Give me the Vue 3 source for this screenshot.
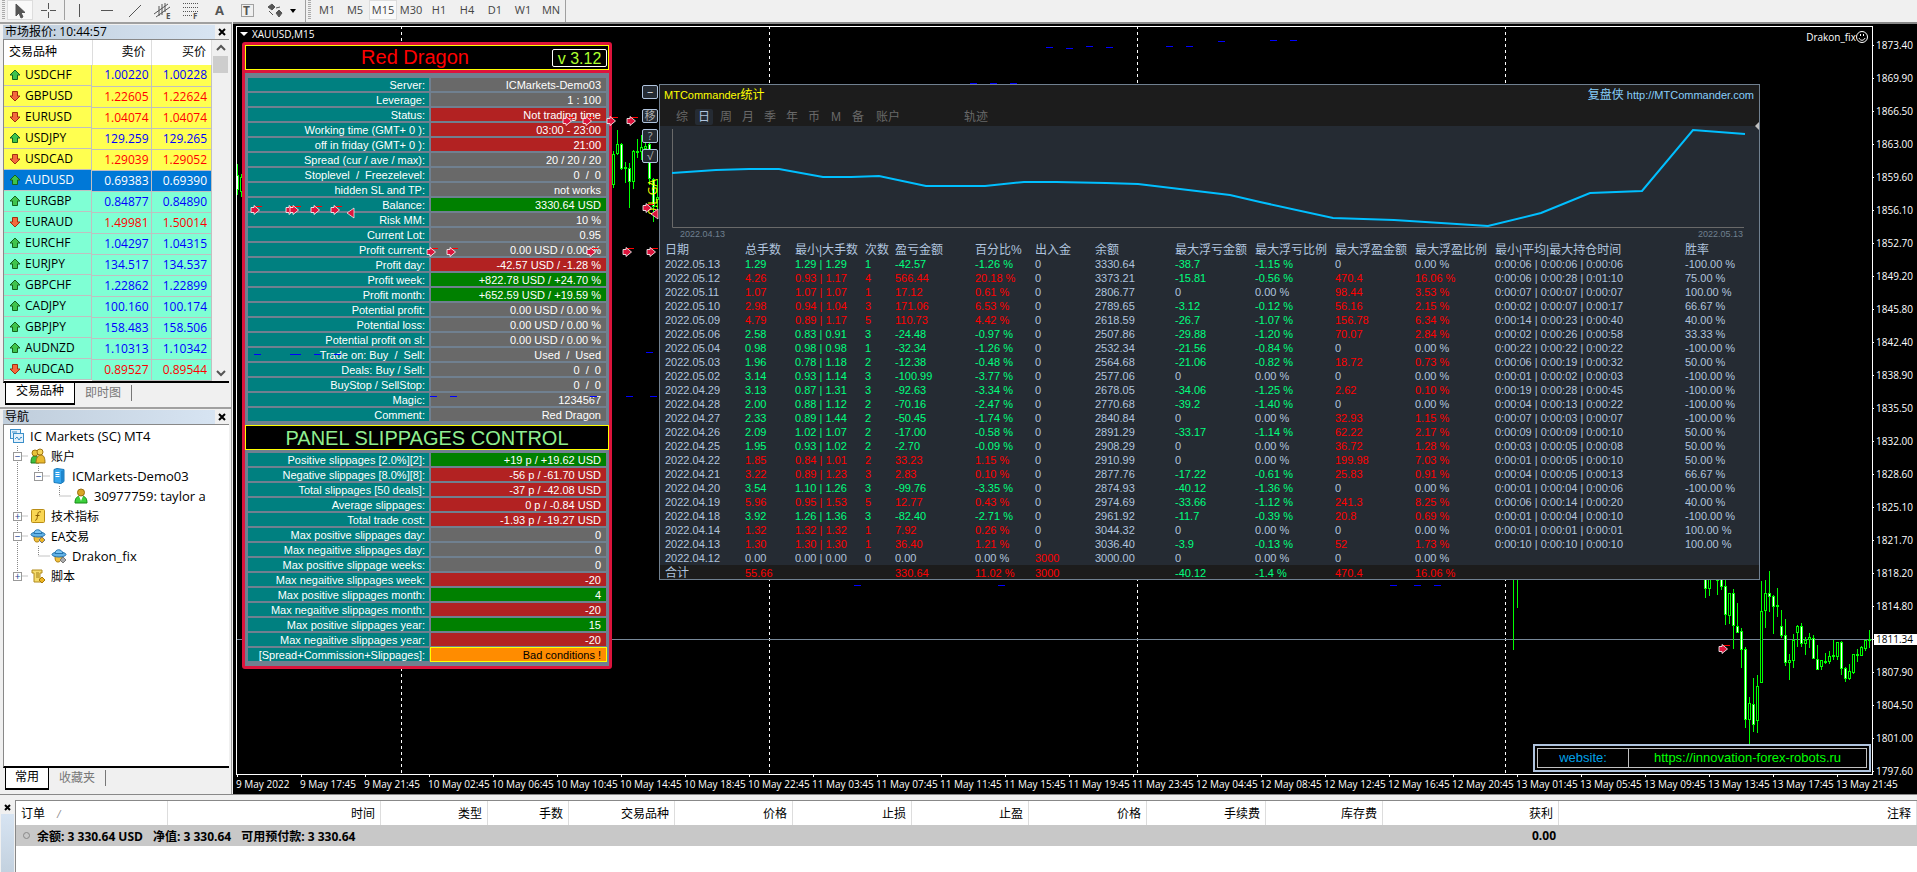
<template>
  <div class="terminal">
    <!-- 工具栏 -->
    <header class="toolbar">
      <span class="grip"></span>
      <button
        v-for="tool in tools"
        :key="tool.name"
        class="tool"
        :class="[tool.name, { pressed: activeTool === tool.name }]"
        :aria-label="tool.name"
        @click="activeTool = tool.name"
      >
        <svg width="22" height="20" viewBox="0 0 22 20">
          <path :d="tool.path" :fill="tool.fill || 'none'" stroke="#555" :stroke-dasharray="tool.dash" />
          <path v-if="tool.extra" :d="tool.extra" fill="none" stroke="#555" />
          <text v-if="tool.text" :x="tool.tx" :y="tool.ty" :font-size="tool.size" font-weight="bold" fill="#555">{{ tool.text }}</text>
        </svg>
      </button>
      <span class="caret"></span>
      <span class="divider"></span>
      <span class="grip"></span>
      <button
        v-for="frame in frames"
        :key="frame"
        class="frame"
        :class="{ pressed: activeFrame === frame }"
        @click="activeFrame = frame"
      >
        {{ frame }}
      </button>
      <span class="divider"></span>
    </header>

    <main class="workspace">
      <aside class="sidebar">
        <!-- 市场报价 -->
        <section class="dock market">
          <div class="dock-title">
            <span class="dock-name">市场报价: 10:44:57</span>
            <button class="close" aria-label="关闭市场报价"><svg width="8" height="8"><path d="M1 1l6 6M7 1l-6 6" stroke="#000" stroke-width="2" /></svg></button>
          </div>
          <div class="market-body">
            <table class="quotes">
              <colgroup>
                <col class="col-symbol" />
                <col class="col-bid" />
                <col />
              </colgroup>
              <thead>
                <tr>
                  <th class="left">交易品种</th>
                  <th>卖价</th>
                  <th>买价</th>
                </tr>
              </thead>
              <tbody>
                <tr
                  v-for="(quote, index) in quotes"
                  :key="quote[0]"
                  :class="[index < 5 ? 'major' : 'minor', { selected: selected === quote[0] }]"
                  @click="selected = quote[0]"
                >
                  <td class="left">
                    <svg width="12" height="12" viewBox="0 0 12 12">
                      <path v-if="quote[3]" d="M6 1L11 6H8.5V10.5H3.5V6H1Z" fill="#3fc44c" stroke="#14641c" />
                      <path v-else d="M6 11L11 6H8.5V1.5H3.5V6H1Z" fill="#f4683c" stroke="#a02c10" />
                    </svg>
                    {{ quote[0] }}
                  </td>
                  <td :class="quote[3] ? 'up' : 'down'">{{ quote[1] }}</td>
                  <td :class="quote[3] ? 'up' : 'down'">{{ quote[2] }}</td>
                </tr>
              </tbody>
            </table>
            <div class="scrollbar">
              <svg width="16" height="16"><path d="M4 10l4-4 4 4" fill="none" stroke="#555" stroke-width="2" /></svg>
              <span class="thumb"></span>
              <svg width="16" height="16"><path d="M4 6l4 4 4-4" fill="none" stroke="#555" stroke-width="2" /></svg>
            </div>
          </div>
          <div class="tabs">
            <button class="tab active">交易品种</button>
            <button class="tab">即时图</button>
          </div>
        </section>

        <!-- 导航 -->
        <section class="dock navigator">
          <div class="dock-title">
            <span class="dock-name">导航</span>
            <button class="close" aria-label="关闭导航"><svg width="8" height="8"><path d="M1 1l6 6M7 1l-6 6" stroke="#000" stroke-width="2" /></svg></button>
          </div>
          <div class="tree">
            <svg class="tree-lines" width="100" height="170">
              <path d="M13.5 20V150M13.5 30H24M13.5 90H24M13.5 110H24M13.5 150H24M34.5 40V50H46M55.5 60V70H67M34.5 120V130H46" fill="none" stroke="#888" stroke-dasharray="1 1" />
            </svg>
            <div v-for="node in tree" :key="node.label" class="node" :class="'level-' + node.level">
              <span v-if="node.mark" class="expander">{{ node.mark }}</span>
              <svg width="16" height="16" viewBox="0 0 16 16">
                <g v-if="node.icon === 'root'" fill="#e4f1fb" stroke="#3b8fc9">
                  <rect x="1.5" y="1.5" width="10" height="9" />
                  <rect x="4.5" y="5.5" width="10" height="9" />
                  <path d="M6 11l2-2 2 3 2-3 1 1M3 4h5" fill="none" />
                </g>
                <g v-else-if="node.icon === 'users'">
                  <path d="M1 15c0-5 1-7 4-7s4 2 4 7z" fill="#3fbf3f" stroke="#1d7a1d" />
                  <circle cx="5" cy="5" r="3" fill="#e9c23a" stroke="#a07410" />
                  <path d="M6 15c0-5 2-8 5-8s4 3 4 8z" fill="#e9b92e" stroke="#a07410" />
                  <circle cx="10" cy="4" r="3" fill="#f6d65a" stroke="#a07410" />
                </g>
                <g v-else-if="node.icon === 'server'">
                  <path d="M3 1.5l3-1 7 1v12l-3 2-7-1z" fill="#35a6ee" stroke="#1878b8" />
                  <path d="M10 3v12l3-2V2z" fill="#1f86cc" />
                  <path d="M4.500 4.500h4M4.500 6.500h4M4.500 8.500h4" stroke="#fff" />
                </g>
                <g v-else-if="node.icon === 'user'">
                  <path d="M2 15c0-5 2-7 6-7s6 2 6 7z" fill="#3ccf3c" stroke="#158a15" />
                  <path d="M6 8l2 5 2-5z" fill="#fff" />
                  <circle cx="8" cy="4.5" r="3.500" fill="#d9a526" stroke="#9a6c0c" />
                </g>
                <g v-else-if="node.icon === 'indicator'">
                  <rect x="1.5" y="1.5" width="13" height="13" rx="1" fill="#f9d654" stroke="#b98d16" />
                  <path d="M11 4c-3-1-3 1-3.5 4s-1 5-2.5 4M5.5 7.5h4" fill="none" stroke="#8a5c00" />
                </g>
                <g v-else-if="node.icon === 'script'">
                  <path d="M2 2h10v3h-2v7h2v2H4V5H2z" fill="#f6dc6c" stroke="#b08a1c" />
                  <path d="M6 5h3M6 7h3M6 9h3" stroke="#a07c18" />
                  <path d="M12 9l3 3-3 3-3-3z" fill="#eeb522" stroke="#a87a0a" />
                </g>
                <g v-else>
                  <path d="M4 8c0 5 1 6 3 6s4-2 4-6z" fill="#f0c040" stroke="#a87a0a" />
                  <ellipse cx="8" cy="6.5" rx="7" ry="2.500" fill="#62b2e6" stroke="#2474ae" />
                  <path d="M4 5.500c0-5 7-5 8 0z" fill="#7cc4f2" stroke="#2474ae" />
                  <path d="M12 9l3 3-3 3-3-3z" :fill="node.icon === 'ea' ? '#eeb522' : '#aaa'" stroke="#777" />
                </g>
              </svg>
              <span :class="{ cjk: node.local }">{{ node.label }}</span>
            </div>
          </div>
          <div class="tabs">
            <button class="tab active">常用</button>
            <button class="tab">收藏夹</button>
          </div>
        </section>
      </aside>

      <!-- K线图 -->
      <section class="chart">
        <div class="plot">
          <svg class="layer" width="100%" height="100%">
            <g transform="translate(-237 -27)" shape-rendering="crispEdges">
              <path d="M401.5 26V774M769.5 26V774M1137.5 26V774M1505.5 26V774" stroke="#fff" stroke-dasharray="3 3" />
              <path d="M237 639.5H1873" stroke="#778899" />
              <g v-for="(bar, index) in candles" :key="index" stroke="#00ff00">
                <line :x1="bar[0] + 0.5" :x2="bar[0] + 0.5" :y1="bar[1]" :y2="bar[2]" />
                <rect
                  v-if="bar[4]"
                  :x="bar[0] - 0.5"
                  :y="bar[3] + 0.5"
                  width="2"
                  :height="bar[4] - bar[3] - 1"
                  :fill="bar[5] ? '#fff' : '#000'"
                />
              </g>
            </g>
          </svg>

          <div class="symbol"><span class="symbol-caret"></span>XAUUSD,M15</div>
          <div class="expert">
            Drakon_fix
            <svg width="12" height="12" viewBox="0 0 12 12" fill="none" stroke="#fff">
              <circle cx="6" cy="6" r="5.500" />
              <path d="M4.500 3v2M7.500 3v2M3 7c1 3 5 3 6 0" />
            </svg>
          </div>
          <div class="lot-note">0.L GA</div>

          <!-- Red Dragon 面板 -->
          <div class="dragon">
            <div class="dragon-title">
              <span class="dragon-name">Red Dragon</span>
              <span class="version">v 3.12</span>
            </div>
            <div class="dragon-body">
              <table class="params">
                <tbody>
                  <tr v-for="row in statusRows" :key="row[0]">
                    <th>{{ row[0] }}</th>
                    <td :class="row[2]">{{ row[1] }}</td>
                  </tr>
                </tbody>
              </table>
              <div class="slippage-title">PANEL SLIPPAGES CONTROL</div>
              <table class="params">
                <tbody>
                  <tr v-for="row in slippageRows" :key="row[0]">
                    <th>{{ row[0] }}</th>
                    <td :class="row[2]">{{ row[1] }}</td>
                  </tr>
                </tbody>
              </table>
            </div>
          </div>

          <div class="side-buttons">
            <button class="minimize">−</button>
            <button>移</button>
            <button>?</button>
            <button>√</button>
          </div>

          <!-- MTCommander 统计窗口 -->
          <div class="commander">
            <div class="commander-head">
              <div class="commander-title">
                <span class="name">MTCommander<span class="cjk">统计</span></span>
                <a href="http://MTCommander.com"><span class="cjk">复盘侠</span> http://MTCommander.com</a>
              </div>
              <nav class="periods">
                <button
                  v-for="period in periods"
                  :key="period"
                  :class="{ active: activePeriod === period, wide: period === '账户', last: period === '轨迹' }"
                  @click="activePeriod = period"
                >
                  {{ period }}
                </button>
              </nav>
              <span class="resize"></span>
            </div>
            <div class="equity">
              <svg width="100%" height="101" viewBox="0 0 1087 101" preserveAspectRatio="none">
                <path d="M0.5 2V100.5H1072" fill="none" stroke="#696969" />
                <polyline :points="equity" fill="none" stroke="#00bfff" stroke-width="2" />
              </svg>
              <div class="equity-range"><span>2022.04.13</span><span>2022.05.13</span></div>
            </div>
            <table class="stats">
              <colgroup>
                <col v-for="(width, index) in statWidths" :key="index" :style="{ width: width + 'px' }" />
                <col />
              </colgroup>
              <thead>
                <tr>
                  <th v-for="head in statHeads" :key="head">{{ head }}</th>
                </tr>
              </thead>
              <tbody>
                <tr v-for="row in stats" :key="row[0]">
                  <td v-for="(cell, index) in row" :key="index" :class="tone(row, index)">{{ cell }}</td>
                </tr>
              </tbody>
              <tfoot>
                <tr>
                  <td v-for="(cell, index) in total" :key="index" :class="tone(total, index)">{{ cell }}</td>
                </tr>
              </tfoot>
            </table>
          </div>

          <div class="website">
            <span class="website-label">website:</span>
            <a href="https://innovation-forex-robots.ru">https://innovation-forex-robots.ru</a>
          </div>

          <!-- 成交箭头与挂单标记 -->
          <svg class="layer marks" width="100%" height="100%">
            <g transform="translate(-237 -27)">
              <path
                v-for="(dash, index) in dashes"
                :key="'d' + index"
                :d="`M${dash[0]} ${dash[1] + 0.5}h${dash[2] || 7}`"
                stroke="#0000ff"
              />
              <g v-for="(mark, index) in marks" :key="'m' + index" :transform="`translate(${mark[0]} ${mark[1]})`">
                <path v-if="mark[2]" d="M3 -5V5L-4 0Z" fill="#dc143c" stroke="#fff" stroke-width="0.7" />
                <template v-else>
                  <path d="M-1 -3.500h8" stroke="#ff0000" />
                  <path d="M-1 -4.500L4.500 0L-1 4.500V2.500H-4V-2.500H-1Z" fill="#dc143c" stroke="#fff" stroke-width="0.8" />
                </template>
              </g>
            </g>
          </svg>
        </div>

        <div class="price-axis">
          <div v-for="price in prices" :key="price" class="price" :class="{ current: price === '1811.34' }">
            <span>{{ price }}</span>
          </div>
        </div>
        <div class="time-axis">
          <span v-for="time in times" :key="time" class="time">{{ time }}</span>
        </div>
      </section>
    </main>

    <!-- 终端 -->
    <section class="orders">
      <div class="orders-strip">
        <button class="close" aria-label="关闭终端"><svg width="7" height="7"><path d="M1 1l5 5M6 1l-5 5" stroke="#000" stroke-width="2" /></svg></button>
        <span class="strip-fill"></span>
      </div>
      <table class="orders-table">
        <colgroup>
          <col v-for="(width, index) in orderWidths" :key="index" :style="{ width: width + 'px' }" />
          <col />
        </colgroup>
        <thead>
          <tr>
            <th v-for="(head, index) in orderHeads" :key="index">{{ head }}<i v-if="index === 0">/</i></th>
          </tr>
        </thead>
        <tbody>
          <tr>
            <td colspan="11">
              <div class="summary">
                <span class="dot"></span><span>余额: 3 330.64 USD</span><span>净值: 3 330.64</span><span>可用预付款: 3 330.64</span>
              </div>
            </td>
            <td class="profit">0.00</td>
            <td></td>
          </tr>
        </tbody>
      </table>
    </section>
  </div>
</template>

<script setup>
import { ref } from 'vue'

const activeTool = ref('cursor')
const activeFrame = ref('M15')
const activePeriod = ref('日')
const selected = ref('AUDUSD')

const tools = [
  { name: 'cursor', path: 'M7 3V15L10 12L12 17L14 16L12 11.5H16Z', fill: '#555' },
  { name: 'crosshair', path: 'M10.5 3V9M10.5 12V18M3 10.5H9M12 10.5H18' },
  { name: 'vertical', path: 'M11.5 4V17' },
  { name: 'horizontal', path: 'M5 10.5H17' },
  { name: 'trend', path: 'M5 17L17 5' },
  { name: 'channel', path: 'M2 14L16 4M4 17L18 7M7 6V16M10 4V15M13 3V12', text: 'E', tx: 14, ty: 19, size: 8 },
  { name: 'fibonacci', path: 'M3 3.5H18M3 7.5H18M3 11.5H18M3 15.5H12', dash: '1 1', text: 'F', tx: 13, ty: 19, size: 8 },
  { name: 'text', path: '', text: 'A', tx: 7, ty: 15, size: 13 },
  { name: 'label', path: 'M5.5 4.5H17.5V16.5H5.5Z', dash: '1 1', text: 'T', tx: 7, ty: 15, size: 12 },
  { name: 'shapes', path: 'M4 7L8 4L11 7L8 10ZM12 13L15 10L18 13L15 17Z', fill: '#555', extra: 'M5 11L9 15M12 8l4-1' },
]

const frames = ['M1', 'M5', 'M15', 'M30', 'H1', 'H4', 'D1', 'W1', 'MN']

// 品种, 卖价, 买价, 是否上涨
const quotes = [
  ['USDCHF', '1.00220', '1.00228', true],
  ['GBPUSD', '1.22605', '1.22624', false],
  ['EURUSD', '1.04074', '1.04074', false],
  ['USDJPY', '129.259', '129.265', true],
  ['USDCAD', '1.29039', '1.29052', false],
  ['AUDUSD', '0.69383', '0.69390', true],
  ['EURGBP', '0.84877', '0.84890', true],
  ['EURAUD', '1.49981', '1.50014', false],
  ['EURCHF', '1.04297', '1.04315', true],
  ['EURJPY', '134.517', '134.537', true],
  ['GBPCHF', '1.22862', '1.22899', true],
  ['CADJPY', '100.160', '100.174', true],
  ['GBPJPY', '158.483', '158.506', true],
  ['AUDNZD', '1.10313', '1.10342', true],
  ['AUDCAD', '0.89527', '0.89544', false],
]

const tree = [
  { label: 'IC Markets (SC) MT4', icon: 'root', level: 0 },
  { label: '账户', icon: 'users', level: 1, mark: '−', local: true },
  { label: 'ICMarkets-Demo03', icon: 'server', level: 2, mark: '−' },
  { label: '30977759: taylor a', icon: 'user', level: 3 },
  { label: '技术指标', icon: 'indicator', level: 1, mark: '+', local: true },
  { label: 'EA交易', icon: 'ea', level: 1, mark: '−', local: true },
  { label: 'Drakon_fix', icon: 'expert', level: 2 },
  { label: '脚本', icon: 'script', level: 1, mark: '+', local: true },
]

const statusRows = [
  ['Server:', 'ICMarkets-Demo03'],
  ['Leverage:', '1 : 100'],
  ['Status:', 'Not trading time', 'bad'],
  ['Working time (GMT+ 0 ):', '03:00 - 23:00', 'bad'],
  ['off in friday (GMT+ 0 ):', '21:00', 'bad'],
  ['Spread (cur / ave / max):', '20 / 20 / 20'],
  ['Stoplevel  /  Freezelevel:', '0  /  0'],
  ['hidden SL and TP:', 'not works'],
  ['Balance:', '3330.64 USD', 'good'],
  ['Risk MM:', '10 %'],
  ['Current Lot:', '0.95'],
  ['Profit current:', '0.00 USD / 0.00 %'],
  ['Profit day:', '-42.57 USD / -1.28 %', 'bad'],
  ['Profit week:', '+822.78 USD / +24.70 %', 'good'],
  ['Profit month:', '+652.59 USD / +19.59 %', 'good'],
  ['Potential profit:', '0.00 USD / 0.00 %'],
  ['Potential loss:', '0.00 USD / 0.00 %'],
  ['Potential profit on sl:', '0.00 USD / 0.00 %'],
  ['Trade on: Buy  /  Sell:', 'Used  /  Used'],
  ['Deals: Buy / Sell:', '0  /  0'],
  ['BuyStop / SellStop:', '0  /  0'],
  ['Magic:', '1234567'],
  ['Comment:', 'Red Dragon'],
]

const slippageRows = [
  ['Positive slippages [2.0%][2]:', '+19 p / +19.62 USD', 'good'],
  ['Negative slippages [8.0%][8]:', '-56 p / -61.70 USD', 'bad'],
  ['Total slippages [50 deals]:', '-37 p / -42.08 USD', 'bad'],
  ['Average slippages:', '0 p / -0.84 USD', 'bad'],
  ['Total trade cost:', '-1.93 p / -19.27 USD', 'bad'],
  ['Max positive slippages day:', '0'],
  ['Max negaitive slippages day:', '0'],
  ['Max positive slippage weeks:', '0'],
  ['Max negaitive slippages week:', '-20', 'bad'],
  ['Max positive slippages month:', '4', 'good'],
  ['Max negaitive slippages month:', '-20', 'bad'],
  ['Max positive slippages year:', '15', 'good'],
  ['Max negaitive slippages year:', '-20', 'bad'],
  ['[Spread+Commission+Slippages]:', 'Bad conditions !', 'warn'],
]

const periods = ['综', '日', '周', '月', '季', '年', '币', 'M', '备', '账户', '轨迹']

const equity =
  '0,46 44,43 77,42 107,42 151,50 179,50 207,49 254,59 313,59 352,55 384,55 434,56 466,57 558,68 588,75 661,91 722,93 816,99 869,86 918,66 970,64 1021,3 1073,7'

const statWidths = [80, 50, 70, 30, 80, 60, 60, 80, 80, 80, 80, 80, 190]
const statHeads = ['日期', '总手数', '最小|大手数', '次数', '盈亏金额', '百分比%', '出入金', '余额', '最大浮亏金额', '最大浮亏比例', '最大浮盈金额', '最大浮盈比例', '最小|平均|最大持仓时间', '胜率']

const stats = [
  ['2022.05.13', '1.29', '1.29 | 1.29', '1', '-42.57', '-1.26 %', '0', '3330.64', '-38.7', '-1.15 %', '0', '0.00 %', '0:00:06 | 0:00:06 | 0:00:06', '-100.00 %'],
  ['2022.05.12', '4.26', '0.93 | 1.17', '4', '566.44', '20.18 %', '0', '3373.21', '-15.81', '-0.56 %', '470.4', '16.06 %', '0:00:06 | 0:00:28 | 0:01:10', '75.00 %'],
  ['2022.05.11', '1.07', '1.07 | 1.07', '1', '17.12', '0.61 %', '0', '2806.77', '0', '0.00 %', '98.44', '3.53 %', '0:00:07 | 0:00:07 | 0:00:07', '100.00 %'],
  ['2022.05.10', '2.98', '0.94 | 1.04', '3', '171.06', '6.53 %', '0', '2789.65', '-3.12', '-0.12 %', '56.16', '2.15 %', '0:00:02 | 0:00:07 | 0:00:17', '66.67 %'],
  ['2022.05.09', '4.79', '0.89 | 1.17', '5', '110.73', '4.42 %', '0', '2618.59', '-26.7', '-1.07 %', '156.78', '6.34 %', '0:00:14 | 0:00:23 | 0:00:40', '40.00 %'],
  ['2022.05.06', '2.58', '0.83 | 0.91', '3', '-24.48', '-0.97 %', '0', '2507.86', '-29.88', '-1.20 %', '70.07', '2.84 %', '0:00:02 | 0:00:26 | 0:00:58', '33.33 %'],
  ['2022.05.04', '0.98', '0.98 | 0.98', '1', '-32.34', '-1.26 %', '0', '2532.34', '-21.56', '-0.84 %', '0', '0.00 %', '0:00:22 | 0:00:22 | 0:00:22', '-100.00 %'],
  ['2022.05.03', '1.96', '0.78 | 1.18', '2', '-12.38', '-0.48 %', '0', '2564.68', '-21.06', '-0.82 %', '18.72', '0.73 %', '0:00:06 | 0:00:19 | 0:00:32', '50.00 %'],
  ['2022.05.02', '3.14', '0.93 | 1.14', '3', '-100.99', '-3.77 %', '0', '2577.06', '0', '0.00 %', '0', '0.00 %', '0:00:01 | 0:00:02 | 0:00:03', '-100.00 %'],
  ['2022.04.29', '3.13', '0.87 | 1.31', '3', '-92.63', '-3.34 %', '0', '2678.05', '-34.06', '-1.25 %', '2.62', '0.10 %', '0:00:19 | 0:00:28 | 0:00:45', '-100.00 %'],
  ['2022.04.28', '2.00', '0.88 | 1.12', '2', '-70.16', '-2.47 %', '0', '2770.68', '-39.2', '-1.40 %', '0', '0.00 %', '0:00:04 | 0:00:13 | 0:00:22', '-100.00 %'],
  ['2022.04.27', '2.33', '0.89 | 1.44', '2', '-50.45', '-1.74 %', '0', '2840.84', '0', '0.00 %', '32.93', '1.15 %', '0:00:07 | 0:00:03 | 0:00:07', '-100.00 %'],
  ['2022.04.26', '2.09', '1.02 | 1.07', '2', '-17.00', '-0.58 %', '0', '2891.29', '-33.17', '-1.14 %', '62.22', '2.17 %', '0:00:09 | 0:00:09 | 0:00:10', '50.00 %'],
  ['2022.04.25', '1.95', '0.93 | 1.02', '2', '-2.70', '-0.09 %', '0', '2908.29', '0', '0.00 %', '36.72', '1.28 %', '0:00:03 | 0:00:05 | 0:00:08', '50.00 %'],
  ['2022.04.22', '1.85', '0.84 | 1.01', '2', '33.23', '1.15 %', '0', '2910.99', '0', '0.00 %', '199.98', '7.03 %', '0:00:01 | 0:00:05 | 0:00:10', '50.00 %'],
  ['2022.04.21', '3.22', '0.89 | 1.23', '3', '2.83', '0.10 %', '0', '2877.76', '-17.22', '-0.61 %', '25.83', '0.91 %', '0:00:04 | 0:00:05 | 0:00:13', '66.67 %'],
  ['2022.04.20', '3.54', '1.10 | 1.26', '3', '-99.76', '-3.35 %', '0', '2874.93', '-40.12', '-1.36 %', '0', '0.00 %', '0:00:01 | 0:00:04 | 0:00:06', '-100.00 %'],
  ['2022.04.19', '5.96', '0.95 | 1.53', '5', '12.77', '0.43 %', '0', '2974.69', '-33.66', '-1.12 %', '241.3', '8.25 %', '0:00:06 | 0:00:14 | 0:00:20', '40.00 %'],
  ['2022.04.18', '3.92', '1.26 | 1.36', '3', '-82.40', '-2.71 %', '0', '2961.92', '-11.7', '-0.39 %', '20.8', '0.69 %', '0:00:01 | 0:00:04 | 0:00:10', '-100.00 %'],
  ['2022.04.14', '1.32', '1.32 | 1.32', '1', '7.92', '0.26 %', '0', '3044.32', '0', '0.00 %', '0', '0.00 %', '0:00:01 | 0:00:01 | 0:00:01', '100.00 %'],
  ['2022.04.13', '1.30', '1.30 | 1.30', '1', '36.40', '1.21 %', '0', '3036.40', '-3.9', '-0.13 %', '52', '1.73 %', '0:00:10 | 0:00:10 | 0:00:10', '100.00 %'],
  ['2022.04.12', '0.00', '0.00 | 0.00', '0', '0.00', '0.00 %', '3000', '3000.00', '0', '0.00 %', '0', '0.00 %', '', ''],
]
const total = ['合计', '55.66', '', '', '330.64', '11.02 %', '3000', '', '-40.12', '-1.4 %', '470.4', '16.06 %', '', '']

// 盈利为红, 亏损为绿; 手数与次数跟随当日盈亏
const tone = (row, index) => {
  if (index === 0 || index === 7 || index > 11) return ''
  const value = parseFloat(index < 5 ? row[4] : row[index])
  if (value > 0) return 'gain'
  return value < 0 ? 'loss' : ''
}

const prices = [
  '1873.40', '1869.90', '1866.50', '1863.00', '1859.60', '1856.10', '1852.70', '1849.20',
  '1845.80', '1842.40', '1838.90', '1835.50', '1832.00', '1828.60', '1825.10', '1821.70',
  '1818.20', '1814.80', '1811.34', '1807.90', '1804.50', '1801.00', '1797.60',
]

const times = [
  '9 May 2022', '9 May 17:45', '9 May 21:45', '10 May 02:45', '10 May 06:45', '10 May 10:45', '10 May 14:45',
  '10 May 18:45', '10 May 22:45', '11 May 03:45', '11 May 07:45', '11 May 11:45', '11 May 15:45', '11 May 19:45',
  '11 May 23:45', '12 May 04:45', '12 May 08:45', '12 May 12:45', '12 May 16:45', '12 May 20:45', '13 May 01:45',
  '13 May 05:45', '13 May 09:45', '13 May 13:45', '13 May 17:45', '13 May 21:45',
]

// x, 最高, 最低, 实体上沿, 实体下沿, 是否阴线
const candles = [
  [237, 164, 195, 175, 190, true], [241, 174, 197, 177, 192],
  [613, 151, 188, 154, 185], [617, 130, 155, 144, 154], [621, 143, 170, 144, 169, true],
  [625, 162, 183, 167, 169], [629, 163, 208, 168, 182, true], [633, 150, 189, 151, 182],
  [637, 139, 158, 151, 153], [641, 135, 160, 147, 152], [645, 142, 150, 146, 149],
  [649, 142, 185, 144, 179, true], [653, 178, 222, 179, 207, true], [657, 179, 209, 197, 200],
  [1513, 579, 650], [1517, 579, 608],
  [1705, 575, 598, 575, 589, true], [1709, 575, 596, 575, 589], [1717, 575, 595, 575, 581],
  [1721, 575, 590, 575, 587, true], [1725, 580, 625, 586, 615, true], [1729, 593, 624, 593, 616],
  [1733, 589, 649, 593, 626, true], [1737, 603, 633, 626, 633, true], [1741, 628, 668, 631, 650, true],
  [1745, 647, 728, 649, 720, true], [1749, 697, 745, 703, 720], [1753, 678, 732, 704, 725, true],
  [1757, 675, 733, 686, 721], [1761, 581, 683, 611, 683], [1765, 580, 628, 593, 611],
  [1769, 571, 612, 593, 597, true], [1773, 595, 634, 596, 607, true], [1777, 588, 617, 605, 607],
  [1781, 610, 638, 626, 636, true], [1785, 619, 666, 635, 663, true], [1789, 654, 680, 660, 663],
  [1793, 634, 668, 640, 661], [1797, 625, 647, 626, 633], [1801, 623, 647, 626, 644, true],
  [1805, 637, 655, 640, 644], [1809, 633, 648, 637, 640], [1813, 635, 659, 638, 659, true],
  [1817, 645, 670, 659, 670, true], [1821, 660, 670, 660, 667], [1825, 653, 664, 661, 663],
  [1829, 651, 664, 656, 662], [1833, 640, 660, 655, 657], [1837, 642, 660, 642, 657],
  [1841, 641, 675, 642, 669, true], [1845, 667, 682, 668, 679, true], [1849, 664, 680, 671, 679],
  [1853, 654, 674, 654, 673], [1857, 649, 662, 654, 656], [1861, 646, 656, 647, 656],
  [1865, 640, 651, 640, 649], [1869, 630, 648, 639, 641],
]

const dashes = [
  [1046, 47], [1066, 48], [1086, 46], [1106, 47], [1166, 46], [1186, 46], [1218, 41], [1270, 40], [1290, 40],
  [970, 83], [990, 83], [1010, 83],
  [254, 354], [290, 354, 11], [314, 354], [334, 354], [646, 352],
  [430, 396], [450, 396], [590, 396], [626, 396], [650, 396],
  [854, 585], [998, 585], [1390, 585], [1414, 585], [1434, 585],
]

const marks = [
  [567, 121], [587, 121], [611, 121], [631, 121],
  [255, 210], [290, 210], [294, 210], [315, 210], [335, 210], [351, 213, true],
  [431, 252], [451, 252], [591, 252], [627, 252], [651, 252],
  [647, 208], [655, 214, true], [1723, 649],
]

const orderWidths = [152, 213, 107, 81, 106, 118, 119, 117, 118, 119, 117, 176]
const orderHeads = ['订单', '时间', '类型', '手数', '交易品种', '价格', '止损', '止盈', '价格', '手续费', '库存费', '获利', '注释']
</script>

<style>
body {
  background: #f0f0f0;
}
</style>

<style scoped>
.terminal {
  height: 100vh;
  min-height: 600px;
  display: flex;
  flex-direction: column;
  background: #f0f0f0;
  color: #000;
  font-family: 'Open Sans', 'Noto Sans CJK SC', sans-serif;
  font-size: 12px;
}

.terminal * {
  box-sizing: border-box;
}

button {
  padding: 0;
  border: 0;
  background: none;
  color: inherit;
  font: inherit;
}

a {
  text-decoration: none;
}

table {
  border-collapse: collapse;
  table-layout: fixed;
}

th,
td {
  padding: 0;
  font-weight: normal;
  white-space: pre;
}

.cjk {
  font-size: 12px;
}

/* 工具栏 */
.toolbar {
  flex: none;
  height: 22px;
  display: flex;
  align-items: flex-start;
}

.grip {
  width: 3px;
  height: 20px;
  margin: 0 2px;
  background: repeating-linear-gradient(#aaa 0 1px, #f0f0f0 1px 2px);
}

.tool {
  width: 28px;
  height: 20px;
  display: flex;
  justify-content: center;
}

.tool.cursor {
  width: 26px;
}

.tool.crosshair {
  width: 32px;
  border-right: 1px solid #a0a0a0;
}

.pressed {
  background: #f9f9f9;
  border: 1px solid #ddd;
}

.caret {
  align-self: center;
  margin: 0 9px 0 1px;
  border: 3px solid transparent;
  border-top: 4px solid #000;
  border-bottom: 0;
}

.divider {
  width: 1px;
  height: 22px;
  background: #a0a0a0;
}

.frame {
  width: 28px;
  height: 20px;
  color: #444;
  font-size: 11px;
  line-height: 18px;
  text-align: center;
}

.workspace {
  flex: 1;
  min-height: 0;
  display: flex;
}

/* 左侧停靠窗口 */
.sidebar {
  width: 232px;
  display: flex;
  flex-direction: column;
  border-top: 2px solid #a0a0a0;
  border-right: 1px solid #a0a0a0;
}

.dock {
  display: flex;
  flex-direction: column;
  padding: 1px 2px 0 3px;
}

.market {
  height: 385px;
  border-bottom: 2px solid #a0a0a0;
}

.navigator {
  flex: 1;
}

.dock-title {
  display: flex;
  align-items: center;
  height: 14px;
}

.dock-name {
  flex: 1;
  padding-left: 2px;
  background: linear-gradient(90deg, #bfcddb, #d7e4f2);
  line-height: 14px;
}

.close {
  display: flex;
  justify-content: center;
  width: 14px;
}

.market-body {
  display: flex;
  border-top: 1px solid #888;
  border-left: 1px solid #888;
  border-bottom: 2px solid #000;
  background: #fff;
}

.quotes {
  flex: 1;
}

.col-symbol {
  width: 88px;
}

.col-bid {
  width: 59px;
}

.quotes th {
  height: 25px;
  padding: 0 5px 2px 0;
  border-right: 1px solid #ddd;
  line-height: 20px;
  text-align: right;
}

.quotes td {
  height: 21px;
  padding-right: 2px;
  border-right: 1px solid #c0c0c0;
  border-bottom: 1px solid #c0c0c0;
  line-height: 20px;
  text-align: right;
}

.quotes td:last-child {
  padding-right: 4px;
}

.quotes .left {
  padding-left: 5px;
  text-align: left;
}

.quotes td.left {
  display: flex;
  align-items: center;
  gap: 4px;
  white-space: nowrap;
}

.major {
  background: #ffff50;
}

.minor {
  background: #7fffd4;
}

.up {
  color: #0000ff;
}

.down {
  color: #ff0000;
}

.selected,
.selected td {
  background: #0078d7;
  color: #fff;
}

.scrollbar {
  width: 17px;
  display: flex;
  flex-direction: column;
  align-items: center;
  background: #f0f0f0;
}

.thumb {
  width: 15px;
  height: 17px;
  margin-bottom: auto;
  background: #cdcdcd;
}

.tabs {
  display: flex;
  padding-left: 2px;
}

.tab {
  height: 16px;
  margin-top: 2px;
  padding: 0 10px;
  border-right: 1px solid #777;
  color: #777;
  line-height: 16px;
}

.tab.active {
  height: 22px;
  margin-top: 0;
  padding-bottom: 3px;
  border: 1px solid #000;
  border-top: 0;
  border-bottom-width: 2px;
  background: #fff;
  color: #000;
}

.tree {
  flex: 1;
  position: relative;
  padding-top: 1px;
  border-top: 1px solid #888;
  border-left: 1px solid #888;
  border-bottom: 2px solid #000;
  background: #fff;
  font-size: 13px;
}

.navigator .tabs {
  height: 26px;
}

.navigator .tab.active {
  padding-left: 9px;
  padding-right: 9px;
}

.tree-lines {
  position: absolute;
  top: 1px;
  left: 0;
}

.node {
  position: relative;
  display: flex;
  align-items: center;
  gap: 5px;
  height: 20px;
  padding-left: 5px;
}

.expander {
  width: 9px;
  height: 9px;
  margin-right: 3px;
  border: 1px solid #999;
  background: #fff;
  color: #1c3f94;
  font-size: 10px;
  line-height: 7px;
  text-align: center;
}

.level-1 {
  padding-left: 9px;
}

.level-2 {
  padding-left: 30px;
}

.level-2:not(:has(.expander)) {
  padding-left: 47px;
}

.level-3 {
  padding-left: 69px;
}

/* 图表区 */
.chart {
  flex: 1;
  min-width: 0;
  display: grid;
  grid-template-columns: 1fr 44px;
  grid-template-rows: minmax(0, 1fr) 19px;
  margin-left: 1px;
  padding: 2px 0 0 3px;
  border-top: 2px solid #888;
  background: #000;
  color: #fff;
  font-size: 10px;
}

.plot {
  position: relative;
  min-width: 0;
  overflow: hidden;
  border: 1px solid #fff;
}

.layer {
  position: absolute;
  inset: 0;
}

.marks {
  pointer-events: none;
}

.symbol {
  position: absolute;
  top: 0;
  left: 3px;
  display: flex;
  align-items: center;
  gap: 4px;
  line-height: 14px;
}

.symbol-caret {
  border: 4px solid transparent;
  border-top: 4px solid #fff;
  border-bottom: 0;
}

.expert {
  position: absolute;
  top: 3px;
  right: 4px;
  display: flex;
  align-items: center;
  line-height: 14px;
}

.lot-note {
  position: absolute;
  top: 152px;
  left: 409px;
  color: #ffff00;
  font-size: 12px;
  line-height: 14px;
  writing-mode: vertical-rl;
  transform: rotate(180deg);
}

/* Red Dragon */
.dragon {
  position: absolute;
  top: 15px;
  left: 5px;
  width: 370px;
  border: 3px solid #dc143c;
  border-radius: 3px;
  background: #dc143c;
  font-family: 'Liberation Sans', Arial, sans-serif;
  font-size: 11px;
}

.dragon-title {
  display: flex;
  align-items: center;
  height: 25px;
  margin-bottom: 3px;
  padding-right: 1px;
  border: 1px solid #ffff00;
  background: #000;
}

.dragon-name {
  flex: 1;
  padding-left: 32px;
  color: #ff0000;
  font-size: 20px;
  text-align: center;
}

.version {
  width: 55px;
  height: 18px;
  border: 1px solid #fff;
  border-radius: 2px;
  color: #adff2f;
  font-size: 16px;
  line-height: 17px;
  text-align: center;
}

.dragon-body {
  padding: 3px 0;
  background: #708090;
}

.params {
  width: 362px;
  margin: 0 1px;
  border-collapse: separate;
  border-spacing: 2px;
}

.params th,
.params td {
  height: 13px;
  padding: 2px 5px 0 0;
  background: #696969;
  line-height: 11px;
  text-align: right;
}

.params th {
  width: 181px;
  padding-right: 4px;
  background: #008080;
}

.params .good {
  background: #008000;
}

.params .bad {
  background: #b22222;
}

.params .warn {
  background: #ff8c00;
  color: #000;
  outline: 1px solid #ffff00;
}

.slippage-title {
  height: 25px;
  margin: 2px 0 1px;
  border: 1px solid #ffff00;
  background: #000;
  color: #90ee90;
  font-size: 20px;
  line-height: 24px;
  text-align: center;
}

/* MTCommander */
.side-buttons {
  position: absolute;
  top: 58px;
  left: 405px;
  display: flex;
  flex-direction: column;
  gap: 6px;
}

.side-buttons button {
  width: 16px;
  height: 14px;
  border: 1px solid #b0c4de;
  border-radius: 2px;
  background: #252b33;
  color: #b0b0b0;
  font-size: 11px;
  line-height: 12px;
}

.side-buttons .minimize {
  margin-bottom: 4px;
  color: #fff;
}

.commander {
  position: absolute;
  top: 57px;
  left: 422px;
  width: 1101px;
  border: 1px solid #708090;
  background: #252b33;
  color: #b0c4de;
  font-family: 'Liberation Sans', 'Noto Sans CJK SC', sans-serif;
  font-size: 11px;
}

.commander-head {
  position: relative;
  height: 41px;
  background: #1c1c1c;
}

.commander-title {
  display: flex;
  justify-content: space-between;
  padding: 0 5px 1px 4px;
  line-height: 20px;
}

.commander-title .name {
  color: #ffff00;
}

.commander-title a {
  color: #87cefa;
}

.periods {
  display: flex;
  gap: 4px;
  padding: 3px 0 0 13px;
}

.periods button {
  width: 18px;
  height: 16px;
  border-radius: 2px;
  color: #696969;
  font-size: 12px;
  line-height: 16px;
}

.periods .active {
  background: #252b33;
  color: #b0c4de;
}

.periods .wide {
  width: 34px;
}

.periods .last {
  width: 34px;
  margin-left: 50px;
}

.resize {
  position: absolute;
  right: 0;
  bottom: -4px;
  border: 4px solid transparent;
  border-left: 0;
  border-right-color: #c0c0c0;
}

.equity {
  height: 115px;
  padding: 1px 0 0 12px;
}

.equity svg {
  display: block;
}

.equity-range {
  display: flex;
  justify-content: space-between;
  padding: 0 16px 0 8px;
  color: #708090;
  font-size: 9px;
  line-height: 12px;
}

.stats {
  width: 100%;
}

.stats th,
.stats td {
  height: 14px;
  padding-left: 5px;
  line-height: 14px;
  text-align: left;
}

.stats th {
  height: 16px;
  padding-top: 2px;
  font-size: 12px;
}

.stats tfoot td {
  padding-top: 2px;
  line-height: 12px;
}

.stats tfoot td:first-child {
  font-size: 12px;
}

.stats tfoot {
  background: #1c1c1c;
}

.gain {
  color: #ff0000;
}

.loss {
  color: #00ff7f;
}

.website {
  position: absolute;
  right: 1px;
  bottom: 2px;
  display: grid;
  grid-template-columns: 91px 239px;
  padding: 2px;
  border: 2px solid #b0c4de;
  background: #000;
  font-family: 'Liberation Sans', Arial, sans-serif;
  font-size: 13px;
  line-height: 18px;
  text-align: center;
}

.website > * {
  border: 1px solid #c0c0c0;
}

.website-label {
  border-right: 0;
  color: #00a2e8;
}

.website a {
  color: #00ff00;
}

/* 坐标轴 */
.price-axis {
  padding-top: 3px;
}

.price {
  display: flex;
  align-items: center;
  height: 33px;
}

.price::before {
  content: '';
  width: 3px;
  height: 1px;
  background: #fff;
}

.price span {
  padding: 0 4px 0 2px;
  line-height: 11px;
}

.price.current span {
  background: #fff;
  color: #000;
}

.time-axis {
  display: flex;
  min-width: 0;
}

.time {
  flex: none;
  width: 64px;
  line-height: 15px;
  white-space: nowrap;
}

.time::before {
  content: '';
  display: block;
  width: 1px;
  height: 2px;
  margin-left: 1px;
  background: #fff;
}

/* 终端 */
.orders {
  flex: none;
  display: flex;
  height: 78px;
  padding-top: 5px;
  border-top: 1px solid #888;
}

.orders-strip {
  width: 15px;
  display: flex;
  flex-direction: column;
}

.orders-strip .close {
  height: 14px;
  align-items: center;
}

.strip-fill {
  flex: 1;
  margin: 0 1px;
  background: linear-gradient(#d7e4f2, #c3d1df);
}

.orders-table {
  flex: 1;
  width: 0;
  align-self: stretch;
  border-top: 1px solid #888;
  border-left: 1px solid #888;
  background: #fff;
  border-collapse: separate;
  border-spacing: 0;
}

.orders-table th {
  height: 24px;
  padding: 0 5px;
  border-right: 1px solid #ddd;
  text-align: right;
}

.orders-table th:first-child {
  text-align: left;
}

.orders-table i {
  margin-left: 12px;
  color: #888;
  font-size: 10px;
}

.orders-table td {
  height: 21px;
  background: #c8c8c8;
  font-weight: bold;
}

.orders-table .profit {
  padding-right: 3px;
  text-align: right;
}

.orders-table::after {
  content: '';
  display: table-row;
  height: 26px;
}

.summary {
  display: flex;
  align-items: center;
  gap: 10px;
  padding-left: 7px;
}

.dot {
  width: 7px;
  height: 7px;
  margin-right: -3px;
  border: 1px solid #888;
  border-radius: 50%;
}
</style>
